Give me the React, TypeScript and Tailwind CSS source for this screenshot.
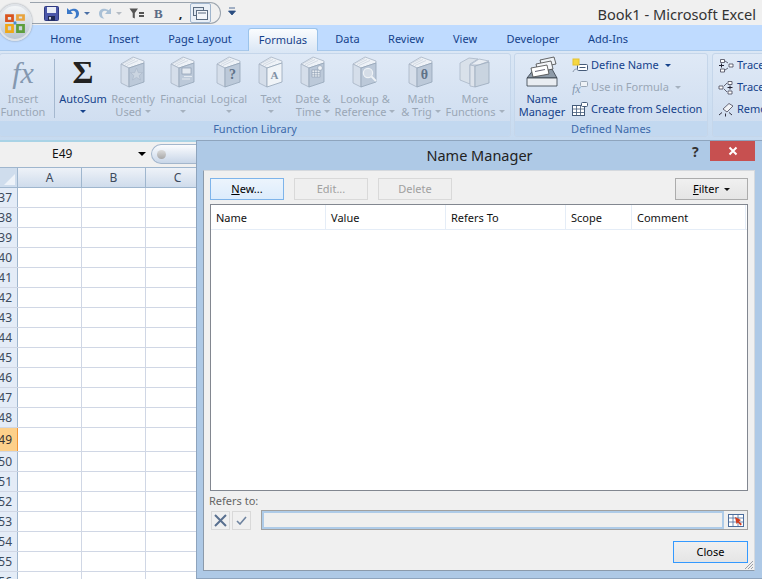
import React from "react";

// greyed out book used by the function library buttons
const Book = ({ children, pale }: { children?: React.ReactNode; pale?: boolean }) => (
  <svg width="26" height="32" viewBox="0 0 26 32">
    <path d="M1 8 L13 1 L24 5 L24 7 L9 12 Z" fill="#eef2f7" stroke="#a7b4c4" strokeWidth="0.8" />
    <path d="M1 8 L1 27 L9 31 L9 12 Z" fill="#d5deea" stroke="#a7b4c4" strokeWidth="0.8" />
    <path d="M9 12 L24 7 L24 26 L9 31 Z" fill={pale ? "#f0f4f8" : "#bcc9d9"} stroke="#94a4b8" strokeWidth="0.8" />
    <path d="M3 7.5 L13 2.5 M5 8.5 L15 3.5 M7 9.5 L18 4.5" stroke="#b6c1ce" strokeWidth="0.5" />
    {children}
  </svg>
);

const StarGlyph = () => <path d="M16.5 12 L18.3 16.6 L22.5 16.6 L19.2 19.6 L20.5 24 L16.5 21.4 L12.5 24 L13.8 19.6 L10.5 16.6 L14.7 16.6 Z" fill="#cbd5e1" stroke="#a8b6c7" strokeWidth="0.6" />;
const FinanceGlyph = () => (
  <g>
    <rect x="12" y="12" width="9" height="6" fill="#e3e9f0" stroke="#8092a8" strokeWidth="0.6" />
    <path d="M14 20.5 h8 M12 23 h8" stroke="#e3e9f0" strokeWidth="1.2" />
  </g>
);
const CharGlyph = ({ c, color = "#5f7288", size = 12 }: { c: string; color?: string; size?: number }) => (
  <text x="16.5" y="23" textAnchor="middle" fontSize={size} fontWeight="700" fontFamily="Liberation Serif, serif" fill={color}>
    {c}
  </text>
);
const DateGlyph = () => (
  <g>
    <rect x="12" y="14" width="8" height="7" fill="#e6ebf1" stroke="#7f91a6" strokeWidth="0.5" />
    <path d="M12 16.5 h8 M12 18.8 h8 M14.6 14 v7 M17.3 14 v7" stroke="#7f91a6" strokeWidth="0.5" />
    <circle cx="20" cy="12" r="2.4" fill="#f0f3f7" stroke="#7f91a6" strokeWidth="0.5" />
  </g>
);
const LookupGlyph = () => (
  <g>
    <circle cx="16" cy="17" r="4.6" fill="#d5dde7" stroke="#eef2f6" strokeWidth="1.2" />
    <path d="M19.5 20.5 L24 25" stroke="#eef2f6" strokeWidth="1.8" />
  </g>
);

const MoreBooks = () => (
  <svg width="32" height="32" viewBox="0 0 32 32">
    <path d="M1 7 L10 2 L19 3 L11 8 L11 28 L1 24 Z" fill="#d9e1ea" stroke="#a9b6c6" strokeWidth="0.8" />
    <path d="M11 9 L20 3 L30 5 L20 9 Z" fill="#e8edf3" stroke="#a9b6c6" strokeWidth="0.8" />
    <path d="M11 9 L11 30 L16 31 L16 10 Z" fill="#dde3eb" stroke="#a9b6c6" strokeWidth="0.8" />
    <path d="M16 10 L30 6 L30 27 L16 31 Z" fill="#c9d4e0" stroke="#9aa9bb" strokeWidth="0.8" />
  </svg>
);

const Caret = ({ color = "#9aa7b6" }: { color?: string }) => (
  <span className="inline-block w-0 h-0 border-x-[3px] border-x-transparent border-t-[3px] align-middle" style={{ borderTopColor: color }} />
);

type FnBtn = { w: string; top: string; bottom?: string; icon: React.ReactNode; active?: boolean };

const fnButtons: FnBtn[] = [
  { w: "w-[42px]", top: "AutoSum", active: true, icon: <span className="font-['Liberation_Serif',serif] font-bold text-[32px] leading-[32px] text-[#222]">Σ</span> },
  { w: "w-[58px]", top: "Recently", bottom: "Used", icon: <Book><StarGlyph /></Book> },
  { w: "w-[42px]", top: "Financial", icon: <Book><FinanceGlyph /></Book> },
  { w: "w-[50px]", top: "Logical", icon: <Book><CharGlyph c="?" size={14} /></Book> },
  { w: "w-[34px]", top: "Text", icon: <Book pale><CharGlyph c="A" color="#7f90a5" size={11} /></Book> },
  { w: "w-[50px]", top: "Date &", bottom: "Time", icon: <Book><DateGlyph /></Book> },
  { w: "w-[54px]", top: "Lookup &", bottom: "Reference", icon: <Book><LookupGlyph /></Book> },
  { w: "w-[58px]", top: "Math", bottom: "& Trig", icon: <Book><CharGlyph c="θ" size={14} /></Book> },
  { w: "w-[50px]", top: "More", bottom: "Functions", icon: <MoreBooks /> },
];

const RibbonButton = ({ b }: { b: FnBtn }) => (
  <div className={`${b.w} shrink-0 flex flex-col items-center whitespace-nowrap`}>
    <div className="h-[36px] flex items-center justify-center">{b.icon}</div>
    <div className={`mt-[2px] text-[11px] leading-[13px] ${b.active ? "text-[#15428b]" : "text-[#9aa7b6]"}`}>{b.top}</div>
    <div className={`h-[13px] text-[11px] leading-[13px] flex items-center gap-[3px] ${b.active ? "text-[#15428b]" : "text-[#9aa7b6]"}`}>
      {b.bottom}
      <Caret color={b.active ? "#15428b" : "#a5b1bf"} />
    </div>
  </div>
);

const Group = ({ className, label, children }: { className: string; label?: string; children: React.ReactNode }) => (
  <div className={`${className} h-[84px] flex flex-col shrink-0 rounded-[3px] border border-[#c5d6ea] bg-gradient-to-b from-[#dfe9f6] to-[#cddcef] overflow-hidden`}>
    <div className="h-[67px] flex">{children}</div>
    <div className="h-[15px] bg-[#c2d8f0] text-center text-[11px] leading-[15px] text-[#3e6aaa] whitespace-nowrap">{label}</div>
  </div>
);

const tabs = [
  { t: "Home", w: "w-[60px]" },
  { t: "Insert", w: "w-[56px]" },
  { t: "Page Layout", w: "w-[96px]" },
  { t: "Formulas", w: "w-[70px]" },
  { t: "Data", w: "w-[59px]" },
  { t: "Review", w: "w-[58px]" },
  { t: "View", w: "w-[60px]" },
  { t: "Developer", w: "w-[76px]" },
  { t: "Add-Ins", w: "w-[74px]" },
];

const SaveIcon = () => (
  <svg width="15" height="15" viewBox="0 0 15 15">
    <rect x="0.5" y="0.5" width="14" height="14" rx="1" fill="#4a56a8" stroke="#2f3a80" />
    <rect x="3" y="1" width="9" height="6" fill="#e9edf6" />
    <rect x="4" y="10" width="7" height="4.5" fill="#1f2752" />
    <rect x="5" y="11" width="2" height="2.5" fill="#c7cbd8" />
  </svg>
);

const UndoIcon = ({ color, flip }: { color: string; flip?: boolean }) => (
  <svg width="14" height="14" viewBox="0 0 14 14" className={flip ? "-scale-x-100" : ""}>
    <path d="M1 2 L1 8 L7 8 L4.8 5.6 C7 4 10 5 10 8 C10 10 9 11.5 7.5 12.5 C11 12.5 13 10.5 13 7.5 C13 3 8 1 3.4 4.2 Z" fill={color} />
  </svg>
);

const OfficeOrb = () => (
  <div className="absolute left-[-2px] top-[4px] w-[34px] h-[37px] rounded-full border-2 border-[#dfe3e8] bg-gradient-to-b from-[#f4f6f8] to-[#b9c4d0] flex items-center justify-center shadow-[0_0_2px_#7c8794]">
    <svg width="22" height="22" viewBox="0 0 20 20">
      <path d="M1 2 H9 V9 H1 Z M3.5 4.5 V7 H6.5 V4.5 Z" fill="#d9541e" fillRule="evenodd" />
      <path d="M11 2 H19 V8 H11 Z M13.5 4 V6 H16.5 V4 Z" fill="#e8a33d" fillRule="evenodd" />
      <path d="M1 11 H9 V19 H1 Z M3.5 13 V16.5 H6.5 V13 Z" fill="#f0a818" fillRule="evenodd" />
      <path d="M11 11 H19 V19 H11 Z M13.5 13 V16.5 H16.5 V13 Z" fill="#5d9e3c" fillRule="evenodd" />
      <circle cx="10" cy="10" r="1.5" fill="#4a8fd0" />
    </svg>
  </div>
);

const QuickAccess = () => (
  <div className="ml-[30px] mt-[2px] h-[22px] w-[191px] flex items-center pl-[14px] rounded-r-full border border-l-0 border-[#9aa3ad] bg-[#f0f0f0]">
    <SaveIcon />
    <span className="ml-[7px] flex"><UndoIcon color="#3a78c8" /></span>
    <span className="ml-[4px] flex"><Caret color="#4a6fa5" /></span>
    <span className="ml-[8px] flex"><UndoIcon color="#a9c0d6" flip /></span>
    <span className="ml-[4px] flex"><Caret color="#b5bcc4" /></span>
    <svg width="15" height="11" viewBox="0 0 15 11" className="ml-[7px]">
      <path d="M0.5 0.5 H9 L5.8 5 V10.5 L3.7 9.5 V5 Z" fill="#555" />
      <path d="M10 5 h5 M10 8 h5" stroke="#222" strokeWidth="1.5" />
    </svg>
    <span className="ml-[10px] font-['Liberation_Serif',serif] font-bold text-[13px] leading-none text-[#5a6b86]">B</span>
    <span className="ml-[16px] font-bold text-[13px] leading-none text-[#222]">,</span>
    <div className="ml-[8px] w-[21px] h-[20px] rounded-[2px] border border-[#9fb4cc] bg-[#e9eff6] flex items-center justify-center">
      <svg width="15" height="13" viewBox="0 0 15 13">
        <rect x="0.5" y="0.5" width="10" height="8" fill="#dfe7f0" stroke="#5a6b80" />
        <rect x="3.5" y="3.5" width="11" height="9" fill="#f3f6fa" stroke="#5a6b80" />
        <path d="M5 6h8" stroke="#5a6b80" />
      </svg>
    </div>
  </div>
);

const SmallRow = ({ icon, label, dim, caret }: { icon: React.ReactNode; label: string; dim?: boolean; caret?: boolean }) => (
  <div className={`h-[22px] flex items-center gap-[3px] whitespace-nowrap text-[11px] ${dim ? "text-[#9aa7b6]" : "text-[#15428b]"}`}>
    <span className="w-[16px] h-[15px] flex items-center justify-center shrink-0">{icon}</span>
    {label}
    {caret && <span className="ml-[3px] flex"><Caret color={dim ? "#a5b1bf" : "#15428b"} /></span>}
  </div>
);

const rows = [
  { n: "37", h: "h-[20px]" }, { n: "38", h: "h-[20px]" }, { n: "39", h: "h-[20px]" }, { n: "40", h: "h-[20px]" },
  { n: "41", h: "h-[20px]" }, { n: "42", h: "h-[20px]" }, { n: "43", h: "h-[20px]" }, { n: "44", h: "h-[20px]" },
  { n: "45", h: "h-[20px]" }, { n: "46", h: "h-[20px]" }, { n: "47", h: "h-[20px]" }, { n: "48", h: "h-[20px]" },
  { n: "49", h: "h-[24px]", sel: true }, { n: "50", h: "h-[20px]" }, { n: "51", h: "h-[20px]" }, { n: "52", h: "h-[20px]" },
  { n: "53", h: "h-[20px]" }, { n: "54", h: "h-[20px]" }, { n: "55", h: "h-[20px]" }, { n: "56", h: "h-[20px]" },
];

const Sheet = () => (
  <div className="w-[196px] overflow-hidden text-[12px]">
    <div className="h-[28px] flex items-center border-t-2 border-[#a9d3e6] bg-[#f0f0f0]">
      <div className="w-[151px] pl-[52px] text-[12px] leading-[16px] text-[#111] relative -mt-[2px]">
        E49
        <span className="absolute right-[5px] top-[6px] w-0 h-0 border-x-[4px] border-x-transparent border-t-[4px] border-t-black" />
      </div>
      <div className="w-[45px] h-[20px] -mt-[2px] rounded-l-full border border-r-0 border-[#a3b6cc] bg-gradient-to-b from-[#fbfcfe] to-[#c8d6e8] pl-[5px] flex items-center">
        <span className="w-[9px] h-[9px] rounded-full bg-gradient-to-b from-[#dcdcdc] to-[#a8a8a8]" />
      </div>
    </div>
    <div className="h-[21px] flex border-y border-[#9fb6ce] -mt-[1px] text-[#333]">
      <div className="w-[18px] shrink-0 bg-[#cfdded] border-r border-[#9fb6ce] flex items-end justify-end p-[2px]">
        <span className="w-0 h-0 border-l-[11px] border-l-transparent border-b-[11px] border-b-[#eef3f9]" />
      </div>
      {["A", "B", "C"].map((c) => (
        <div key={c} className="w-[64px] shrink-0 bg-gradient-to-b from-[#eef2f8] to-[#cfdcec] border-r border-[#9fb6ce] text-center leading-[19px] text-[#3c4a5c]">
          {c}
        </div>
      ))}
    </div>
    {rows.map((r) => (
      <div key={r.n} className={`${r.h} flex border-b border-[#d0d7e5] bg-white`}>
        <div className={`w-[18px] shrink-0 border-r overflow-hidden flex items-center justify-end pr-[5px] text-[12px] ${r.sel ? "bg-[#fdd08a] border-[#f29536] text-[#333]" : "bg-[#e4ecf7] border-[#9fb6ce] text-[#3c4a5c]"}`}>
          <span className="whitespace-nowrap">{r.n}</span>
        </div>
        <div className="w-[64px] shrink-0 border-r border-[#d0d7e5]" />
        <div className="w-[64px] shrink-0 border-r border-[#d0d7e5]" />
        <div className="w-[50px] shrink-0" />
      </div>
    ))}
  </div>
);

const DlgButton = ({ label, u, rest, dim, accent, caret, className = "" }: { label?: string; u?: string; rest?: string; dim?: boolean; accent?: string; caret?: boolean; className?: string }) => (
  <div className={`h-[22px] flex items-center justify-center text-[11px] border ${accent ?? (dim ? "border-[#d9d9d9]" : "border-[#acacac]")} ${dim ? "bg-[#efefef] text-[#a0a0a0]" : "bg-gradient-to-b from-[#f0f0f0] to-[#e5e5e5] text-black"} ${className}`}>
    {u && <span className="underline">{u}</span>}
    {rest}
    {label}
    {caret && <span className="ml-[5px] flex"><Caret color="#111" /></span>}
  </div>
);

const NameManager = () => (
  <div className="absolute left-[196px] top-[140px] w-[566px] h-[439px] border-l border-t border-b border-[#8ea4bd] bg-[#aec9e6] flex flex-col">
    <div className="h-[29px] shrink-0 relative flex items-center justify-center text-[14.5px] text-[#222]">
      Name Manager
      <span className="absolute left-[495px] top-0 text-[14px] font-bold text-[#333]">?</span>
      <div className="absolute left-[513px] top-0 w-[45px] h-[20px] bg-[#c75050] flex items-center justify-center">
        <svg width="10" height="10" viewBox="0 0 10 10">
          <path d="M1.5 1.5 L8.5 8.5 M8.5 1.5 L1.5 8.5" stroke="#fff" strokeWidth="2" />
        </svg>
      </div>
    </div>
    <div className="relative ml-[6px] mr-[7px] mb-[7px] flex-1 min-h-0 bg-[#f0f0f0] border border-[#8b9aab] border-t-[#d5d9de] border-r-[#d5d9de] px-[6px] flex flex-col">
      <div className="mt-[7px] flex items-center gap-[10px]">
        <DlgButton u="N" rest="ew..." accent="border-[#7eb4ea]" className="w-[74px] !bg-gradient-to-b !from-[#ecf4fc] !to-[#dcecfc]" />
        <DlgButton label="Edit..." dim className="w-[74px]" />
        <DlgButton label="Delete" dim className="w-[74px]" />
        <DlgButton u="F" rest="ilter" caret className="w-[73px] ml-auto" />
      </div>
      <div className="mt-[4px] flex-1 bg-white border border-[#828790] min-h-0">
        <div className="h-[25px] flex text-[11px] text-[#111] border-b border-[#e5edf7]">
          {[["Name", "w-[115px]"], ["Value", "w-[120px]"], ["Refers To", "w-[120px]"], ["Scope", "w-[66px]"], ["Comment", "w-[114px]"]].map(([t, w]) => (
            <div key={t} className={`${w} shrink-0 border-r border-[#e5edf7] pl-[5px] leading-[25px]`}>{t}</div>
          ))}
        </div>
      </div>
      <div className="mt-[3px] -ml-px text-[11px] leading-[14px] text-[#666]">Refers to:</div>
      <div className="mt-[2px] h-[20px] flex items-center">
        <div className="w-[19px] h-[19px] border border-[#d9d9d9] flex items-center justify-center ml-[1px]">
          <svg width="15" height="15" viewBox="0 0 15 15"><path d="M2 2 L13 13 M13 2 L2 13" stroke="#59708f" strokeWidth="2" /></svg>
        </div>
        <div className="w-[19px] h-[19px] border border-[#d9d9d9] flex items-center justify-center ml-[2px]">
          <svg width="11" height="9" viewBox="0 0 11 9"><path d="M1 5 L4 8 L10 1" fill="none" stroke="#6f84a0" strokeWidth="1.6" /></svg>
        </div>
        <div className="ml-[10px] flex-1 h-[20px] border border-[#a0a0a0] flex">
          <div className="flex-1 bg-[#efefef] border-2 border-[#aecbe8]" />
          <div className="w-[23px] bg-[#efefef] flex items-center justify-center">
            <svg width="16" height="13" viewBox="0 0 16 13">
              <rect x="0.5" y="0.5" width="15" height="12" fill="#fff" stroke="#4c6d9c" />
              <path d="M0 4h16 M0 8h16 M5 0v13 M10 0v13" stroke="#4c6d9c" strokeWidth="0.8" />
              <path d="M7 3 L13 6 L11 7.5 L14 10 L12.5 11.5 L10 8.5 L8.5 10 Z" fill="#d33c1e" />
            </svg>
          </div>
        </div>
      </div>
      <div className="mt-[11px] mb-[7px] flex justify-end">
        <DlgButton label="Close" accent="border-[#3399ff]" className="w-[75px]" />
      </div>
      <svg width="10" height="10" viewBox="0 0 10 10" className="absolute right-0 bottom-0">
        <path d="M9 1 L1 9 M9 4 L4 9 M9 7 L7 9" stroke="#9aa0a8" strokeWidth="1" />
      </svg>
    </div>
  </div>
);

export default function App() {
  return (
    <div className="relative w-[762px] h-[579px] overflow-hidden bg-white font-['Noto_Sans',sans-serif]">
      {/* Title bar */}
      <div className="h-[25px] bg-[#f0f0f0] flex items-start relative">
        <QuickAccess />
        <span className="ml-[7px] mt-[7px]">
          <svg width="8" height="10" viewBox="0 0 8 10"><path d="M1 1h6M0.5 4h7L4 8z" fill="#2a4d80" stroke="#2a4d80" strokeWidth="0.8" /></svg>
        </span>
        <div className="ml-auto mr-[6px] mt-[3px] text-[14.6px] leading-[22px] text-[#333] whitespace-nowrap">Book1 - Microsoft Excel</div>
      </div>
      <OfficeOrb />
      {/* Tabs */}
      <div className="h-[25px] bg-[#bfdbff] pl-[36px] flex items-end text-[11px] text-[#15428b]">
        {tabs.map((t) =>
          t.t === "Formulas" ? (
            <div key={t.t} className={`${t.w} shrink-0 h-[23px] rounded-t-[3px] border border-b-0 border-[#9bc3ea] bg-gradient-to-b from-[#fafcfe] to-[#dbe7f5] text-center leading-[21px] relative z-10 -mb-[1px]`}>
              {t.t}
            </div>
          ) : (
            <div key={t.t} className={`${t.w} shrink-0 text-center leading-[23px]`}>{t.t}</div>
          )
        )}
      </div>
      {/* Ribbon */}
      <div className="h-[90px] bg-gradient-to-b from-[#dbe7f5] to-[#c6daf0] border-t border-[#a8c8ea] flex items-start pt-[2px] overflow-hidden">
        <Group className="w-[512px] -ml-px" label="Function Library">
          <div className="w-[46px] shrink-0 flex flex-col items-center whitespace-nowrap text-[#9aa7b6]">
            <div className="h-[36px] flex items-center justify-center font-['Liberation_Serif',serif] italic text-[30px] text-[#8498b0]">fx</div>
            <div className="mt-[2px] text-[11px] leading-[13px]">Insert</div>
            <div className="text-[11px] leading-[13px]">Function</div>
          </div>
          <div className="w-[16px] shrink-0 flex justify-center pt-[5px] pb-[3px]"><div className="w-px bg-[#a5b8cf]" /></div>
          {fnButtons.map((b) => <RibbonButton key={b.top} b={b} />)}
        </Group>
        <Group className="w-[194px] ml-[3px]" label="Defined Names">
          <div className="w-[54px] shrink-0 flex flex-col items-center whitespace-nowrap text-[#15428b] text-[11px] leading-[13px]">
            <div className="h-[36px] flex items-center justify-center">
              <svg width="32" height="32" viewBox="0 0 32 32">
                <path d="M1 22 L8 13 L26 13 L31 22 Z" fill="#8d9aa8" stroke="#333c47" strokeWidth="0.8" />
                <path d="M1 22 H31 V30 H1 Z" fill="#e9edf2" stroke="#333c47" strokeWidth="0.8" />
                <path d="M14 4 L28 1 L30 8 L16 11 Z" fill="#eef2f6" stroke="#444" strokeWidth="0.8" />
                <path d="M10 8 L25 5 L27 13 L12 16 Z" fill="#f4f6f9" stroke="#444" strokeWidth="0.8" />
                <path d="M5 12 L21 9 L23 18 L7 21 Z" fill="#fff" stroke="#444" strokeWidth="0.8" />
                <path d="M9 15.5 L19 13.5" stroke="#667" />
              </svg>
            </div>
            <div className="mt-[2px]">Name</div>
            <div>Manager</div>
          </div>
          <div className="ml-[3px] flex flex-col">
            <SmallRow label="Define Name" caret icon={<svg width="16" height="15" viewBox="0 0 16 15"><rect x="5.5" y="6.5" width="10" height="6" rx="1" fill="#fff" stroke="#445a78" /><path d="M7.5 9.5h6" stroke="#445a78" /><path d="M1 14 C2 11 4 11 6 11" fill="none" stroke="#8a97a8" /><rect x="1" y="1" width="6" height="6" fill="#f5d742" stroke="#e6c22e" /></svg>} />
            <SmallRow label="Use in Formula" dim caret icon={<svg width="16" height="15" viewBox="0 0 16 15"><rect x="8.5" y="1.5" width="7" height="5" rx="1" fill="#eef2f6" stroke="#9aa7b6" /><text x="0" y="13" fontSize="12" fontStyle="italic" fontFamily="Liberation Serif, serif" fill="#8498b0">fx</text></svg>} />
            <SmallRow label="Create from Selection" icon={<svg width="16" height="14" viewBox="0 0 16 14"><rect x="0.5" y="3.5" width="12" height="10" fill="#fff" stroke="#445a78" /><path d="M0 7h13M0 10.5h13M4.5 3v11M8.5 3v11" stroke="#445a78" strokeWidth="0.8" /><rect x="9.5" y="0.5" width="6" height="4" rx="1" fill="#fff" stroke="#445a78" /></svg>} />
          </div>
        </Group>
        <Group className="w-[60px] ml-[4px]">
          <div className="pl-[5px] flex flex-col">
            <SmallRow label="Trace Precedents" icon={<svg width="16" height="15" viewBox="0 0 16 15"><path d="M2.5 1.5h4v3h-4z M2.5 11h4v3h-4z" fill="#fff" stroke="#445" strokeWidth="0.8" /><path d="M11 6h4v3h-4z" fill="#fff" stroke="#445" strokeWidth="0.8" /><path d="M7 3l3 2M7 12l3-2" stroke="#445" strokeWidth="0.8" /><path d="M1 7.5h5M3.5 5.5v4" stroke="#223" strokeWidth="1" /></svg>} />
            <SmallRow label="Trace Dependents" icon={<svg width="16" height="15" viewBox="0 0 16 15"><path d="M1 6h4v3H1z M10 1.5h4v3h-4z M10 11h4v3h-4z" fill="#fff" stroke="#445" strokeWidth="0.8" /><path d="M6 6l3-3M6 9l3 3" stroke="#445" strokeWidth="0.8" /><path d="M9.5 7.5h5M12 5.5v4" stroke="#223" strokeWidth="1" /></svg>} />
            <SmallRow label="Remove Arrows" icon={<svg width="16" height="15" viewBox="0 0 16 15"><path d="M5 7 L11 1.5 L15 4 L9 10 Z" fill="#f2f4f7" stroke="#667" /><path d="M1 13L4 10.5M7.5 14.5v-3M14 13l-3-2.5" stroke="#334" /></svg>} />
          </div>
        </Group>
      </div>
      <Sheet />
      <NameManager />
    </div>
  );
}
